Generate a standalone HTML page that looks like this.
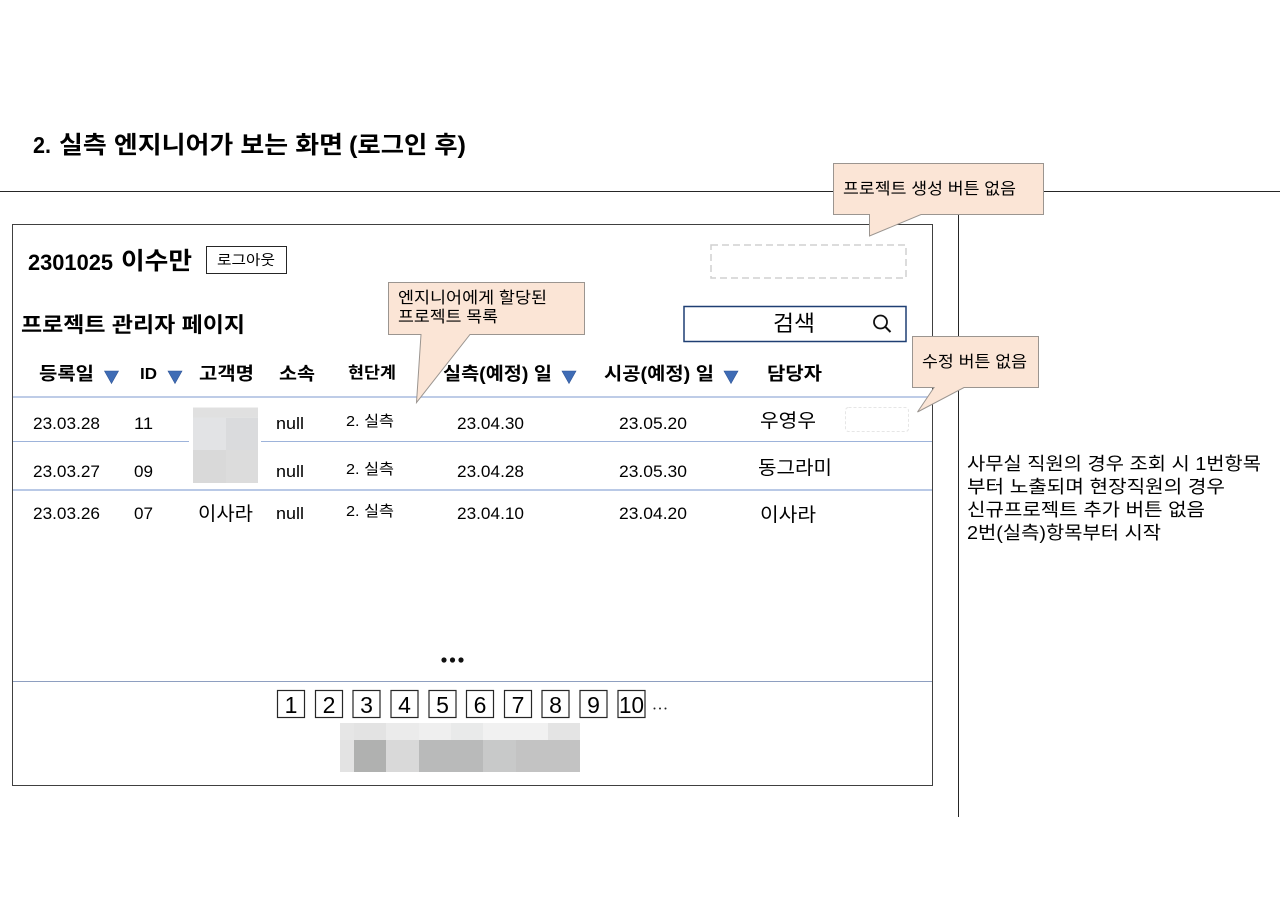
<!DOCTYPE html>
<html lang="ko">
<head>
<meta charset="utf-8">
<title>실측 엔지니어가 보는 화면</title>
<style>
html,body{margin:0;padding:0;background:#fff;width:1280px;height:901px;overflow:hidden}
svg{display:block}
text{font-family:"Liberation Sans","Noto Sans CJK KR","NanumGothic",sans-serif;fill:#000}
.b{font-weight:700}
</style>
</head>
<body>
<svg width="1280" height="901" viewBox="0 0 1280 901" xmlns="http://www.w3.org/2000/svg">
<rect width="1280" height="901" fill="#fff"/>

<text class="b" x="33" y="153" font-size="23" textLength="18" lengthAdjust="spacingAndGlyphs">2.</text>
<text class="b" x="59" y="153" font-size="24" textLength="284" lengthAdjust="spacingAndGlyphs">실측 엔지니어가 보는 화면</text>
<text class="b" x="349" y="153" font-size="24" textLength="117" lengthAdjust="spacingAndGlyphs">(로그인 후)</text>

<line x1="0" y1="191.5" x2="1280" y2="191.5" stroke="#262626"/>
<line x1="958.5" y1="191" x2="958.5" y2="817" stroke="#262626"/>
<rect x="12.5" y="224.5" width="920" height="561" fill="#fff" stroke="#404040"/>

<text class="b" x="28" y="270" font-size="22" textLength="85" lengthAdjust="spacingAndGlyphs">2301025</text>
<text class="b" x="121" y="269" font-size="24" textLength="71" lengthAdjust="spacingAndGlyphs">이수만</text>
<rect x="206.5" y="246.5" width="80" height="27" fill="#fff" stroke="#262626"/>
<text x="217" y="265" font-size="14" textLength="58" lengthAdjust="spacingAndGlyphs">로그아웃</text>
<rect x="711" y="245" width="195" height="33" fill="none" stroke="#d0d0d0" stroke-width="1.5" stroke-dasharray="7 4"/>

<text class="b" x="21" y="332" font-size="21" textLength="224" lengthAdjust="spacingAndGlyphs">프로젝트 관리자 페이지</text>

<rect x="684" y="306.5" width="222" height="35" fill="#fff" stroke="#1f3f73" stroke-width="1.5"/>
<text x="773" y="331" font-size="22" textLength="42" lengthAdjust="spacingAndGlyphs">검색</text>
<circle cx="880.5" cy="322" r="6.5" fill="none" stroke="#111" stroke-width="1.8"/>
<line x1="885.5" y1="327" x2="890.5" y2="332" stroke="#111" stroke-width="2"/>

<g class="b" font-weight="700">
<text x="39" y="380" font-size="18" textLength="55" lengthAdjust="spacingAndGlyphs">등록일</text>
<text x="140" y="379" font-size="16" textLength="17" lengthAdjust="spacingAndGlyphs">ID</text>
<text x="199" y="380" font-size="18" textLength="55" lengthAdjust="spacingAndGlyphs">고객명</text>
<text x="279" y="380" font-size="18" textLength="36" lengthAdjust="spacingAndGlyphs">소속</text>
<text x="348" y="378" font-size="16" textLength="48" lengthAdjust="spacingAndGlyphs">현단계</text>
<text x="443" y="380" font-size="18" textLength="109" lengthAdjust="spacingAndGlyphs">실측(예정) 일</text>
<text x="604" y="380" font-size="18" textLength="110" lengthAdjust="spacingAndGlyphs">시공(예정) 일</text>
<text x="767" y="380" font-size="18" textLength="55" lengthAdjust="spacingAndGlyphs">담당자</text>
</g>
<g fill="#3f6cb5" stroke="#2f5597" stroke-width=".6">
<path d="M104.5 371h14l-7 12.5z"/>
<path d="M168 371h14l-7 12.5z"/>
<path d="M562 371h14l-7 12.5z"/>
<path d="M724 371h14l-7 12.5z"/>
</g>

<line x1="13" y1="397" x2="932" y2="397" stroke="#a9bcdf" stroke-width="1.5"/>
<line x1="13" y1="441.5" x2="189" y2="441.5" stroke="#9db3da"/>
<line x1="261" y1="441.5" x2="932" y2="441.5" stroke="#9db3da"/>
<line x1="13" y1="490" x2="932" y2="490" stroke="#8fa9d6" stroke-width="1.2"/>
<line x1="13" y1="681.5" x2="932" y2="681.5" stroke="#8e9fc0"/>

<rect x="193" y="407.5" width="65" height="75.5" fill="#e2e3e5"/>
<rect x="193" y="407.5" width="65" height="10" fill="#e0e0e0"/>
<rect x="226" y="418" width="32" height="32" fill="#dadbdd"/>
<rect x="193" y="450" width="33" height="33" fill="#d9d9d9"/>
<rect x="226" y="450" width="32" height="33" fill="#dcdcdc"/>

<g font-size="17">
<text x="33" y="429" textLength="67" lengthAdjust="spacingAndGlyphs">23.03.28</text>
<text x="134" y="429" textLength="19" lengthAdjust="spacingAndGlyphs">11</text>
<text x="276" y="429" textLength="28" lengthAdjust="spacingAndGlyphs">null</text>
<text x="457" y="429" textLength="67" lengthAdjust="spacingAndGlyphs">23.04.30</text>
<text x="619" y="429" textLength="68" lengthAdjust="spacingAndGlyphs">23.05.20</text>
<text x="33" y="477" textLength="67" lengthAdjust="spacingAndGlyphs">23.03.27</text>
<text x="134" y="477" textLength="19" lengthAdjust="spacingAndGlyphs">09</text>
<text x="276" y="477" textLength="28" lengthAdjust="spacingAndGlyphs">null</text>
<text x="457" y="477" textLength="67" lengthAdjust="spacingAndGlyphs">23.04.28</text>
<text x="619" y="477" textLength="68" lengthAdjust="spacingAndGlyphs">23.05.30</text>
<text x="33" y="519" textLength="67" lengthAdjust="spacingAndGlyphs">23.03.26</text>
<text x="134" y="519" textLength="19" lengthAdjust="spacingAndGlyphs">07</text>
<text x="276" y="519" textLength="28" lengthAdjust="spacingAndGlyphs">null</text>
<text x="457" y="519" textLength="67" lengthAdjust="spacingAndGlyphs">23.04.10</text>
<text x="619" y="519" textLength="68" lengthAdjust="spacingAndGlyphs">23.04.20</text>
</g>
<g font-size="15">
<text x="346" y="426" textLength="48" lengthAdjust="spacingAndGlyphs">2. 실측</text>
<text x="346" y="474" textLength="48" lengthAdjust="spacingAndGlyphs">2. 실측</text>
<text x="346" y="516" textLength="48" lengthAdjust="spacingAndGlyphs">2. 실측</text>
</g>
<g font-size="19">
<text x="198" y="520" textLength="55" lengthAdjust="spacingAndGlyphs">이사라</text>
<text x="760" y="427" textLength="56" lengthAdjust="spacingAndGlyphs">우영우</text>
<text x="758" y="474" textLength="74" lengthAdjust="spacingAndGlyphs">동그라미</text>
<text x="760" y="521" textLength="56" lengthAdjust="spacingAndGlyphs">이사라</text>
</g>
<rect x="845.5" y="407.5" width="63" height="24" rx="3" fill="none" stroke="#e6e6e6" stroke-dasharray="3 2"/>

<circle cx="444" cy="660" r="2.6" fill="#111"/>
<circle cx="452.500" cy="660" r="2.6" fill="#111"/>
<circle cx="461" cy="660" r="2.6" fill="#111"/>

<g fill="#fff" stroke="#262626" stroke-width="1.2">
<rect x="277.500" y="690.500" width="27" height="27"/>
<rect x="315.500" y="690.500" width="27" height="27"/>
<rect x="353" y="690.500" width="27" height="27"/>
<rect x="391" y="690.500" width="27" height="27"/>
<rect x="429" y="690.500" width="27" height="27"/>
<rect x="466.500" y="690.500" width="27" height="27"/>
<rect x="504.500" y="690.500" width="27" height="27"/>
<rect x="542" y="690.500" width="27" height="27"/>
<rect x="580" y="690.500" width="27" height="27"/>
<rect x="618" y="690.500" width="27" height="27"/>
</g>
<g font-size="23" text-anchor="middle">
<text x="291" y="713">1</text>
<text x="329" y="713">2</text>
<text x="366.500" y="713">3</text>
<text x="404.500" y="713">4</text>
<text x="442.500" y="713">5</text>
<text x="480" y="713">6</text>
<text x="518" y="713">7</text>
<text x="555.500" y="713">8</text>
<text x="593.500" y="713">9</text>
<text x="631.500" y="713" textLength="25" lengthAdjust="spacingAndGlyphs">10</text>
</g>
<g fill="#222">
<circle cx="654.500" cy="708.500" r="1"/><circle cx="660" cy="708.500" r="1"/><circle cx="665.500" cy="708.500" r="1"/>
</g>

<rect x="340" y="723" width="240" height="49" fill="#e6e6e6"/>
<rect x="354" y="723" width="32" height="17" fill="#e3e3e3"/>
<rect x="386" y="723" width="33" height="17" fill="#ebebeb"/>
<rect x="419" y="723" width="32" height="17" fill="#efefef"/>
<rect x="451" y="723" width="32" height="17" fill="#e9eaea"/>
<rect x="483" y="723" width="65" height="17" fill="#f1f1f1"/>
<rect x="548" y="723" width="32" height="17" fill="#e4e4e4"/>
<rect x="340" y="740" width="14" height="32" fill="#e3e3e3"/>
<rect x="354" y="740" width="32" height="32" fill="#b0b1b0"/>
<rect x="386" y="740" width="33" height="32" fill="#d9d9d9"/>
<rect x="419" y="740" width="64" height="32" fill="#b9baba"/>
<rect x="483" y="740" width="33" height="32" fill="#c8c9c9"/>
<rect x="516" y="740" width="64" height="32" fill="#c3c3c3"/>

<g fill="#fbe5d6" stroke="#9b9590" stroke-width="1">
<path d="M833.500 163.500H1043.500V214.500H921L869.500 236V214.500H833.500Z"/>
<path d="M912.500 336.500H1038.500V387.500H964L917.500 412L934 387.500H912.500Z"/>
<path d="M388.500 282.500H584.500V334.500H470L416.500 402.500L421 334.500H388.500Z"/>
</g>
<text x="843" y="194" font-size="16" textLength="173" lengthAdjust="spacingAndGlyphs">프로젝트 생성 버튼 없음</text>
<text x="922" y="367" font-size="16" textLength="105" lengthAdjust="spacingAndGlyphs">수정 버튼 없음</text>
<text x="398" y="303" font-size="16" textLength="149" lengthAdjust="spacingAndGlyphs">엔지니어에게 할당된</text>
<text x="398" y="322" font-size="16" textLength="100" lengthAdjust="spacingAndGlyphs">프로젝트 목록</text>

<g font-size="18">
<text x="967" y="470" textLength="294" lengthAdjust="spacingAndGlyphs">사무실 직원의 경우 조회 시 1번항목</text>
<text x="967" y="493" textLength="258" lengthAdjust="spacingAndGlyphs">부터 노출되며 현장직원의 경우</text>
<text x="967" y="516" textLength="238" lengthAdjust="spacingAndGlyphs">신규프로젝트 추가 버튼 없음</text>
<text x="967" y="539" textLength="194" lengthAdjust="spacingAndGlyphs">2번(실측)항목부터 시작</text>
</g>
</svg>
</body>
</html>
